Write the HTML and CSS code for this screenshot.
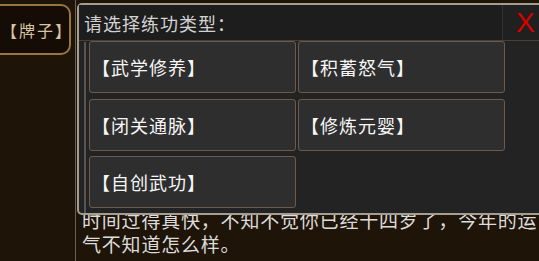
FILE: index.html
```html
<!DOCTYPE html>
<html lang="zh-CN">
<head>
<meta charset="utf-8">
<title>练功</title>
<link rel="stylesheet" href="styles.css">
</head>
<body>
<div class="screen">
  <aside class="side">
    <div class="tag">【牌子】</div>
  </aside>
  <main class="main">
    <p class="story">时间过得真快，不知不觉你已经十四岁了，今年的运气不知道怎么样。</p>
  </main>
  <div class="dialog">
    <header class="dialog-head">
      <div class="dialog-title">请选择练功类型：</div>
      <div class="dialog-close">X</div>
    </header>
    <div class="dialog-body">
      <div class="rail"></div>
      <div class="options">
        <div class="option">【武学修养】</div>
        <div class="option">【积蓄怒气】</div>
        <div class="option">【闭关通脉】</div>
        <div class="option">【修炼元婴】</div>
        <div class="option">【自创武功】</div>
      </div>
    </div>
  </div>
</div>
</body>
</html>
```
FILE: styles.css
```css
html, body {
  margin: 0;
  padding: 0;
  background: #1f1408;
}
.screen {
  position: relative;
  display: flex;
  width: 539px;
  height: 261px;
  overflow: hidden;
  background: #1f1408;
  font-family: "Noto Sans CJK SC", "Noto Sans", sans-serif;
}
.side {
  width: 75px;
  flex: none;
  border-right: 1px solid #6b6156;
}
.tag {
  box-sizing: border-box;
  margin-top: 4px;
  margin-left: -10px;
  width: 81px;
  height: 51px;
  padding-left: 9px;
  display: flex;
  align-items: center;
  border: 2px solid #9a7444;
  border-radius: 0 10px 10px 0;
  background: #150d05;
  color: #d6c4a0;
  font-size: 16px;
  letter-spacing: 2px;
}
.main {
  flex: 1;
  display: flex;
  flex-direction: column;
  justify-content: flex-end;
  padding: 0 0 5px 6px;
}
.story {
  margin: 0;
  color: #dcdcdc;
  font-size: 19px;
  letter-spacing: 0.8px;
  line-height: 24px;
}
.dialog {
  position: absolute;
  left: 77px;
  top: 3px;
  right: -10px;
  height: 212px;
  box-sizing: border-box;
  border: 2px solid #a59e90;
  border-radius: 5px;
  background: #232323;
  display: flex;
  flex-direction: column;
}
.dialog-head {
  display: flex;
  height: 36px;
  flex: none;
  box-sizing: border-box;
  border-bottom: 1px solid #4a3f35;
  background: #1d1d1d;
}
.dialog-title {
  flex: 1;
  padding-left: 5px;
  display: flex;
  align-items: center;
  color: #d2d2d2;
  font-size: 18px;
  letter-spacing: 1px;
}
.dialog-close {
  width: 45px;
  padding-left: 13px;
  box-sizing: border-box;
  border-left: 1px solid #3a3029;
  display: flex;
  align-items: center;
  color: #d80000;
  font-family: "Liberation Sans", Arial, sans-serif;
  font-size: 28px;
  background: #202020;
}
.dialog-body {
  flex: 1;
  display: flex;
  padding-left: 5px;
}
.rail {
  width: 2px;
  margin-top: 1px;
  background: #555555;
  margin-right: 3px;
}
.options {
  display: grid;
  grid-template-columns: 207px 207px;
  grid-auto-rows: 52px;
  column-gap: 2px;
  row-gap: 5.5px;
}
.option {
  box-sizing: border-box;
  display: flex;
  align-items: center;
  padding-left: 2px;
  border: 1px solid #6b5b4d;
  border-radius: 3px;
  background: #2e2e2e;
  color: #f6f6f6;
  font-size: 18px;
  letter-spacing: 1px;
}
```
